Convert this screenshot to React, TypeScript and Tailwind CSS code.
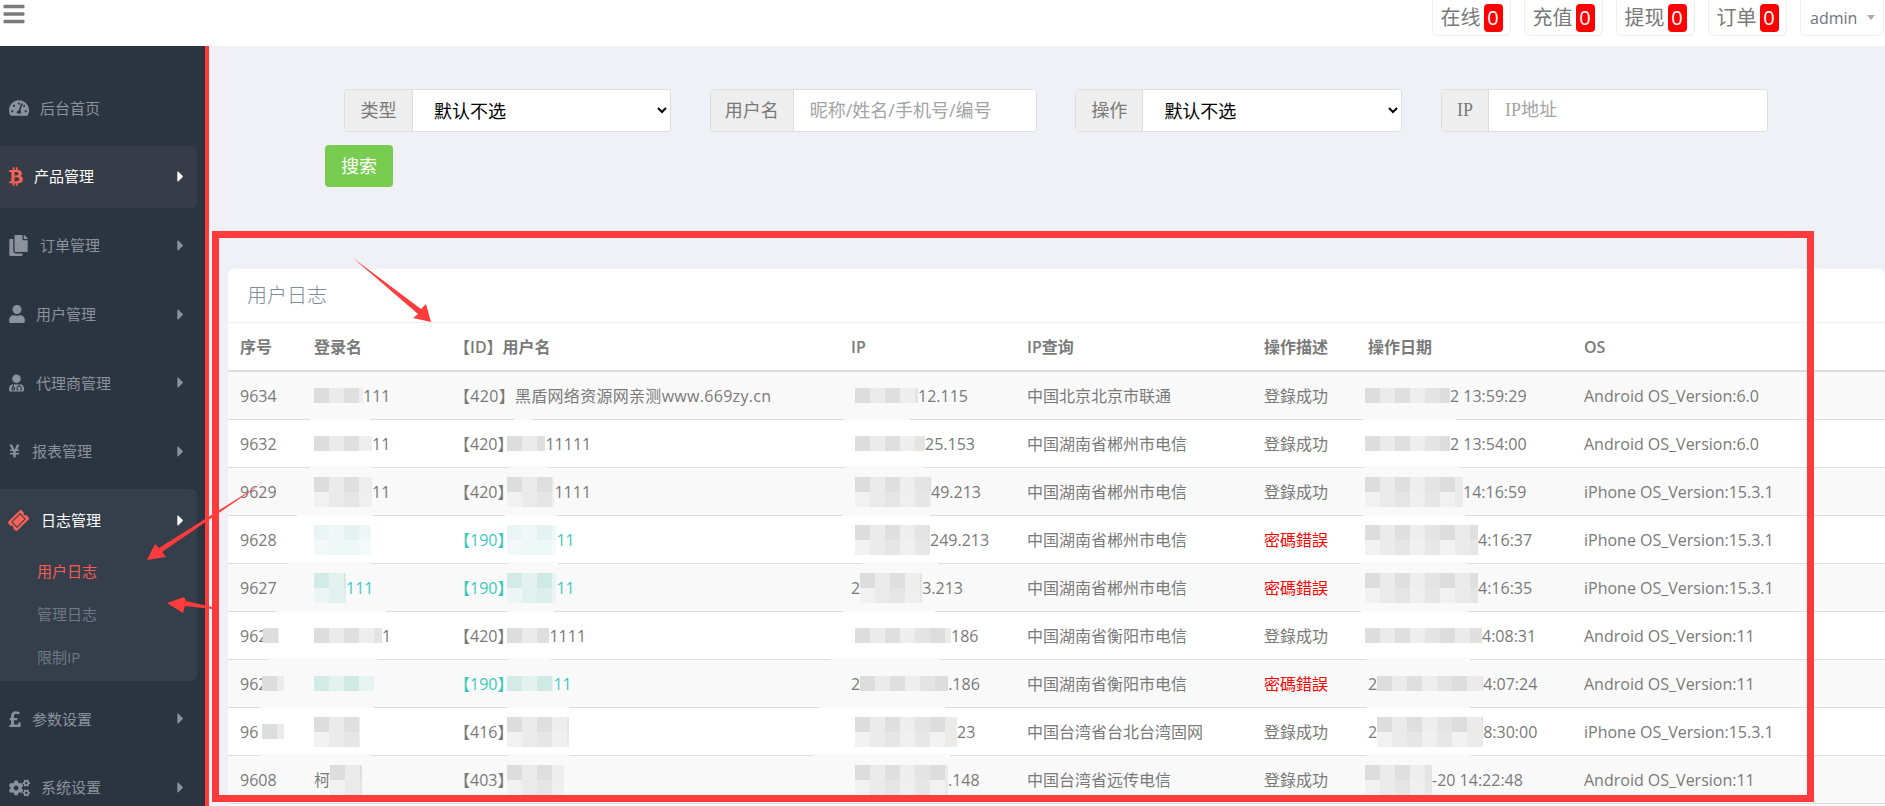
import React from 'react';
import {
  FaBars,
  FaBtc,
  FaCaretRight,
  FaCogs,
  FaCopy,
  FaPoundSign,
  FaTachometerAlt,
  FaTicketAlt,
  FaUser,
  FaUserMd,
  FaYenSign,
} from 'react-icons/fa';

type Tone = 'gray' | 'teal' | 'pale';
type Piece = string | { w: number; rows: number; tone: Tone; ml: number };

const m = (w: number, rows = 1, tone: Tone = 'gray', ml = 0): Piece => ({ w, rows, tone, ml });

const tones: Record<Tone, string[]> = {
  gray: ['#dddddd', '#ebebeb', '#dfdfdf', '#eeeeee', '#e4e4e4'],
  teal: ['#d2ebe6', '#e3f2ef', '#cfe9e4', '#e6f4f1', '#d8eeea'],
  pale: ['#e8f5f4', '#f0f8f7', '#e4f3f1', '#eef7f6', '#eaf6f5'],
};

// pixelated cover over the hidden parts of a value
function Mosaic({ w, rows, tone, ml }: { w: number; rows: number; tone: Tone; ml: number }) {
  const cols = Math.ceil(w / 15);
  const palette = tones[tone];
  return (
    <span className="flex shrink-0 flex-col overflow-hidden" style={{ width: w, marginLeft: ml }}>
      {Array.from({ length: rows }).map((_, r) => (
        <span key={r} className="flex h-[15px]">
          {Array.from({ length: cols }).map((_, c) => (
            <span
              key={c}
              className="h-[15px] w-[15px] shrink-0"
              style={{ backgroundColor: palette[(c + r * 3) % palette.length], opacity: r === 0 ? 1 : 0.75 }}
            />
          ))}
        </span>
      ))}
    </span>
  );
}

function Cell({ pieces, className = '', children }: { pieces: Piece[]; className?: string; children?: React.ReactNode }) {
  return (
    <td className={`h-[48px] whitespace-nowrap border-b border-[#dddddd] p-0 pl-3 ${className}`}>
      <div className="flex items-center">
        {pieces.map((p, i) =>
          typeof p === 'string' ? <span key={i}>{p}</span> : <Mosaic key={i} {...p} />
        )}
      </div>
      {children}
    </td>
  );
}

const OK = '登錄成功';
const BAD = '密碼錯誤';

const rows: {
  no: Piece[];
  login: Piece[];
  name: Piece[];
  ip: Piece[];
  city: string;
  action: string;
  date: Piece[];
  os: string;
  teal?: boolean;
  nameClass?: string;
  gaps: [string, string, string, string];
}[] = [
  {
    no: ['9634'],
    login: [m(49), '111'],
    name: ['【420】黑盾网络资源网亲测www.669zy.cn'],
    nameClass: 'tracking-[0.3px]',
    ip: [m(63, 1, 'gray', 4), '12.115'],
    city: '中国北京北京市联通',
    action: OK,
    date: [m(85, 1, 'gray', -3), '2 13:59:29'],
    os: 'Android OS_Version:6.0',
    gaps: ['left-[82px] w-[60px]', 'left-[286px] w-[17px]', 'left-[617px] w-[65px]', 'left-[1135px] w-[93px]'],
  },
  {
    no: ['9632'],
    login: [m(58), '11'],
    name: ['【420】', m(38, 1, 'gray', -6), '11111'],
    ip: [m(70, 1, 'gray', 4), '25.153'],
    city: '中国湖南省郴州市电信',
    action: OK,
    date: [m(85, 1, 'gray', -3), '2 13:54:00'],
    os: 'Android OS_Version:6.0',
    gaps: ['left-[82px] w-[63px]', 'left-[281px] w-[40px]', 'left-[617px] w-[80px]', 'left-[1135px] w-[97px]'],
  },
  {
    no: ['9629'],
    login: [m(58, 2), '11'],
    name: ['【420】', m(47, 2, 'gray', -6), '1111'],
    ip: [m(76, 2, 'gray', 4), '49.213'],
    city: '中国湖南省郴州市电信',
    action: OK,
    date: [m(98, 2, 'gray', -3), '14:16:59'],
    os: 'iPhone OS_Version:15.3.1',
    gaps: ['left-[69px] w-[76px]', 'left-[277px] w-[51px]', 'left-[614px] w-[88px]', 'left-[1135px] w-[102px]'],
  },
  {
    no: ['9628'],
    login: [m(57, 2, 'pale')],
    name: ['【190】', m(49, 2, 'pale', -6), '11'],
    ip: [m(75, 2, 'gray', 4), '249.213'],
    city: '中国湖南省郴州市电信',
    action: BAD,
    date: [m(113, 2, 'gray', -3), '4:16:37'],
    os: 'iPhone OS_Version:15.3.1',
    teal: true,
    gaps: ['left-[60px] w-[83px]', 'left-[280px] w-[50px]', 'left-[635px] w-[75px]', 'left-[1132px] w-[107px]'],
  },
  {
    no: ['9627'],
    login: [m(32, 2, 'teal'), '111'],
    name: ['【190】', m(49, 2, 'teal', -6), '11'],
    ip: ['2', m(62, 2), '3.213'],
    city: '中国湖南省郴州市电信',
    action: BAD,
    date: [m(113, 2, 'gray', -3), '4:16:35'],
    os: 'iPhone OS_Version:15.3.1',
    teal: true,
    gaps: ['left-[49px] w-[109px]', 'left-[280px] w-[46px]', 'left-[615px] w-[92px]', 'left-[1133px] w-[106px]'],
  },
  {
    no: ['962', m(16, 1, 'gray', -4)],
    login: [m(68), '1'],
    name: ['【420】', m(42, 1, 'gray', -6), '1111'],
    ip: [m(96, 1, 'gray', 4), '186'],
    city: '中国湖南省衡阳市电信',
    action: OK,
    date: [m(117, 1, 'gray', -3), '4:08:31'],
    os: 'Android OS_Version:11',
    gaps: ['left-[40px] w-[109px]', 'left-[280px] w-[43px]', 'left-[603px] w-[109px]', 'left-[1139px] w-[103px]'],
  },
  {
    no: ['962', m(22, 1, 'gray', -5)],
    login: [m(60, 1, 'teal')],
    name: ['【190】', m(46, 1, 'teal', -6), '11'],
    ip: ['2', m(88), '.186'],
    city: '中国湖南省衡阳市电信',
    action: BAD,
    date: ['2', m(106), '4:07:24'],
    os: 'Android OS_Version:11',
    teal: true,
    gaps: ['left-[33px] w-[113px]', 'left-[280px] w-[61px]', 'left-[592px] w-[125px]', 'left-[1139px] w-[103px]'],
  },
  {
    no: ['96', m(22, 1, 'gray', 4)],
    login: [m(46, 2)],
    name: ['【416】', m(62, 2, 'gray', -6)],
    ip: [m(102, 2, 'gray', 4), '23'],
    city: '中国台湾省台北台湾固网',
    action: OK,
    date: ['2', m(106, 2), '8:30:00'],
    os: 'iPhone OS_Version:15.3.1',
    gaps: ['left-[31px] w-[112px]', 'left-[280px] w-[61px]', 'left-[585px] w-[137px]', 'left-[1139px] w-[104px]'],
  },
  {
    no: ['9608'],
    login: ['柯', m(32, 2)],
    name: ['【403】', m(57, 2, 'gray', -6)],
    ip: [m(93, 2, 'gray', 4), '.148'],
    city: '中国台湾省远传电信',
    action: OK,
    date: [m(67, 2, 'gray', -3), '-20 14:22:48'],
    os: 'Android OS_Version:11',
    gaps: ['left-[31px] w-[100px]', 'left-[280px] w-[55px]', 'left-[585px] w-[130px]', 'left-[1139px] w-[100px]'],
  },
];

const menu = [
  { label: '后台首页', icon: <FaTachometerAlt className="w-[20px] text-[20px]" />, gap: 'gap-[11px]', arrow: false },
  { label: '产品管理', icon: <FaBtc className="w-[14px] text-[19px]" />, gap: 'gap-[11px]', arrow: true, active: true },
  { label: '订单管理', icon: <FaCopy className="w-[19px] text-[21px]" />, gap: 'gap-[12px]', arrow: true },
  { label: '用户管理', icon: <FaUser className="w-[16px] text-[18px]" />, gap: 'gap-[11px]', arrow: true },
  { label: '代理商管理', icon: <FaUserMd className="w-[15px] text-[18px]" />, gap: 'gap-[12px]', arrow: true },
  { label: '报表管理', icon: <FaYenSign className="w-[11px] text-[18px]" />, gap: 'gap-[12px]', arrow: true },
  {
    label: '日志管理',
    icon: <FaTicketAlt className="w-[19px] -rotate-45 text-[19px]" />,
    gap: 'gap-[13px]',
    arrow: true,
    active: true,
    children: ['用户日志', '管理日志', '限制IP'],
  },
  { label: '参数设置', icon: <FaPoundSign className="w-[12px] text-[18px]" />, gap: 'gap-[11px]', arrow: true },
  { label: '系统设置', icon: <FaCogs className="w-[21px] text-[20px]" />, gap: 'gap-[11px]', arrow: true },
];

function Sidebar() {
  return (
    <aside className="flex w-[205px] shrink-0 flex-col gap-[6.7px] bg-[#2b3542] pr-2 pt-[31px] text-[15px]">
      {menu.map((item) => (
        <div
          key={item.label}
          className={`shrink-0 rounded-r-md ${item.children ? 'bg-[#353f4c]' : item.active ? 'bg-[#373d48]' : ''}`}
        >
          <div className={`flex h-[62px] items-center pl-[9px] pr-[8px] ${item.active ? 'text-white' : 'text-[#8b929b]'}`}>
            <span className={`flex items-center ${item.gap}`}>
              <span className={item.active ? 'text-[#fb6157]' : 'text-[#8b929b]'}>{item.icon}</span>
              {item.label}
            </span>
            {item.arrow && <FaCaretRight className="ml-auto text-[17px]" />}
          </div>
          {item.children && (
            <div className="-mt-[1.5px] flex h-[131.5px] flex-col pb-[2px] pl-[37px]">
              {item.children.map((c, i) => (
                <div key={c} className={`flex h-[43.5px] items-center ${i === 0 ? 'text-[#fb5a50]' : 'text-[#6e7883]'}`}>
                  {c}
                </div>
              ))}
            </div>
          )}
        </div>
      ))}
    </aside>
  );
}

function StatBox({ label, count }: { label: string; count: number }) {
  return (
    <div className="flex h-[36px] w-[79px] items-center justify-center gap-[3px] rounded-b-md border border-t-0 border-[#eeeeee] text-[20px] text-[#797979]">
      {label}
      <span className="flex h-[28px] w-[19px] items-center justify-center rounded-[4px] bg-[#ff0000] text-[20px] font-medium leading-none text-white">
        {count}
      </span>
    </div>
  );
}

function Addon({ children, className }: { children: React.ReactNode; className: string }) {
  return (
    <span
      className={`flex shrink-0 items-center justify-center rounded-l-[4px] border-r border-[#dddddd] bg-[#eeeeee] text-[#797979] ${className}`}
    >
      {children}
    </span>
  );
}

function SelectGroup({ label, addon }: { label: string; addon: string }) {
  return (
    <div className="flex h-[43px] w-[327px] overflow-hidden rounded-[4px] border border-[#dddddd] bg-white text-[18px]">
      <Addon className={addon}>{label}</Addon>
      <select className="min-w-0 flex-1 bg-white pl-[17px] pr-[2px] text-black outline-none">
        <option>默认不选</option>
      </select>
    </div>
  );
}

function InputGroup({ label, addon, placeholder, serif }: { label: string; addon: string; placeholder: string; serif?: boolean }) {
  return (
    <div className="flex h-[43px] w-[327px] overflow-hidden rounded-[4px] border border-[#dddddd] bg-white text-[18px]">
      <Addon className={`${addon} ${serif ? "font-['Liberation_Serif','Noto_Sans_CJK_SC',serif]" : ''}`}>{label}</Addon>
      <input
        placeholder={placeholder}
        className={`min-w-0 flex-1 bg-white pl-[16px] outline-none placeholder:text-[#a3a3a3] ${serif ? "font-['Liberation_Serif','Noto_Sans_CJK_SC',serif]" : ''}`}
      />
    </div>
  );
}

export default function App() {
  return (
    <div className="relative h-[806px] w-[1885px] overflow-hidden bg-[#f0f1f6] font-['Open_Sans','Noto_Sans_CJK_SC',sans-serif] text-[16px] text-[#797979]">
      <header className="flex h-[46px] items-start bg-white">
        <FaBars className="ml-[2px] mt-[2px] text-[24px] text-[#7a7a7a]" />
        <div className="ml-auto flex gap-[13px] pr-px">
          <StatBox label="在线" count={0} />
          <StatBox label="充值" count={0} />
          <StatBox label="提现" count={0} />
          <StatBox label="订单" count={0} />
          <div className="flex h-[36px] w-[84px] items-center gap-[10px] rounded-b-md border border-t-0 border-[#eeeeee] pl-[9px] text-[#6c7480]">
            admin
            <span className="h-0 w-0 border-x-[4px] border-t-[5px] border-x-transparent border-t-[#a9adb5]" />
          </div>
        </div>
      </header>

      <div className="flex h-[760px]">
        <Sidebar />
        <div className="w-[4px] shrink-0 bg-[#ff3b3b]" />
        <main className="min-w-0 flex-1">
          <div className="flex gap-[38.7px] pl-[135px] pt-[43px]">
            <SelectGroup label="类型" addon="w-[68px]" />
            <InputGroup label="用户名" addon="w-[83px]" placeholder="昵称/姓名/手机号/编号" />
            <SelectGroup label="操作" addon="w-[67px]" />
            <InputGroup label="IP" addon="w-[47px]" placeholder="IP地址" serif />
          </div>
          <button className="ml-[116px] mt-[13px] flex h-[42px] w-[68px] items-center justify-center rounded-[4px] bg-[#78cd51] text-[18px] text-white">
            搜索
          </button>

          <section className="ml-[19px] mt-[82px] rounded-t-md bg-white">
            <div className="flex h-[54px] items-center border-b border-[#eeeeee] pl-[19px] text-[20px] font-light text-[#7f8a94]">
              用户日志
            </div>
            <table className="w-full table-fixed border-separate border-spacing-0">
              <colgroup>
                <col className="w-[74px]" />
                <col className="w-[140px]" />
                <col className="w-[397px]" />
                <col className="w-[176px]" />
                <col className="w-[237px]" />
                <col className="w-[104px]" />
                <col className="w-[216px]" />
                <col />
              </colgroup>
              <thead>
                <tr>
                  {['序号', '登录名', '【ID】用户名', 'IP', 'IP查询', '操作描述', '操作日期', 'OS'].map((h) => (
                    <th key={h} className="h-[49px] border-b-2 border-[#dddddd] p-0 pl-3 text-left font-semibold text-[#7a7a7a]">
                      {h}
                    </th>
                  ))}
                </tr>
              </thead>
              <tbody>
                {rows.map((r, i) => {
                  const link = r.teal ? 'text-[#3cc9bd]' : '';
                  return (
                    <tr key={i} className={`relative ${i % 2 === 0 ? 'bg-[#f9f9f9]' : 'bg-white'}`}>
                      <Cell pieces={r.no} />
                      <Cell pieces={r.login} className={link} />
                      <Cell pieces={r.name} className={`${link} ${r.nameClass ?? ''}`} />
                      <Cell pieces={r.ip} />
                      <Cell pieces={[r.city]} />
                      <Cell pieces={[r.action]} className={r.action === BAD ? 'text-[#ff0000]' : ''} />
                      <Cell pieces={r.date} />
                      <Cell pieces={[r.os]}>
                        {i < 8 &&
                          r.gaps.map((g) => <span key={g} className={`absolute bottom-0 h-[2px] bg-[#fafafa] ${g}`} />)}
                      </Cell>
                    </tr>
                  );
                })}
                <tr className="bg-[#f9f9f9]">
                  <td colSpan={8} className="h-[48px] p-0" />
                </tr>
              </tbody>
            </table>
          </section>
        </main>
      </div>

      {/* annotations drawn over the screenshot */}
      <div className="pointer-events-none absolute left-[212px] top-[231px] h-[571px] w-[1602px] border-[7px] border-[#ff3b3b]" />
      <svg className="pointer-events-none absolute inset-0 h-full w-full" viewBox="0 0 1885 806">
        <polygon fill="#ff3b3b" points="353,258 418,314 413,318 431,322 426,304 421,309" />
        <polygon fill="#ff3b3b" points="264,482 159,548 155,544 147,560 166,557 162,552" />
        <polygon fill="#ff3b3b" points="212,607 186,601 184,597 167,603 183,613 185,606 212,609" />
      </svg>
    </div>
  );
}
